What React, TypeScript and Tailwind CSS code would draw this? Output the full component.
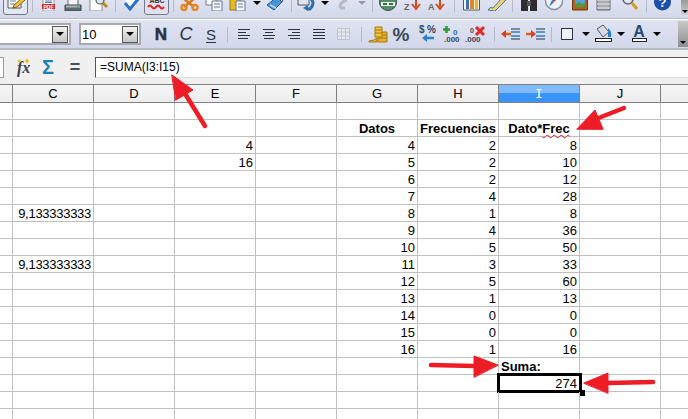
import React from "react";

const SANS = "font-['Liberation_Sans',Arial,sans-serif]";

function Drop() {
  return <span className="block h-0 w-0 border-x-[4px] border-t-[4px] border-x-transparent border-t-black" />;
}
function Sep1({ ml }: { ml: string }) {
  return <span className={`${ml} w-px bg-[#b4b8c8] h-[12px] mb-[6px] shrink-0`} />;
}
function Sep2({ ml }: { ml: string }) {
  return <span className={`${ml} w-px bg-[#b4b8c8] h-[15px] shrink-0`} />;
}
function I1({ ml, children }: { ml: string; children: React.ReactNode }) {
  return (
    <svg viewBox="0 0 24 24" className={`${ml} h-[24px] w-[24px] shrink-0 mb-[7px]`}>
      {children}
    </svg>
  );
}
function I2({ ml, children }: { ml: string; children: React.ReactNode }) {
  return (
    <svg viewBox="0 0 24 24" className={`${ml} h-[24px] w-[24px] shrink-0`}>
      {children}
    </svg>
  );
}
function Drop1({ ml, gray }: { ml: string; gray?: boolean }) {
  return (
    <span
      className={`${ml} mb-[13px] h-0 w-[8px] shrink-0 border-x-[4px] border-t-[4px] border-x-transparent ${
        gray ? "border-t-[#9a9daa]" : "border-t-black"
      }`}
    />
  );
}
function Combo({ cls, label }: { cls: string; label?: string }) {
  return (
    <div className={`${cls} h-[22px] border-2 border-[#a9a9b0] bg-white flex items-center justify-between shrink-0`}>
      <span className={`${SANS} text-[13px] leading-none text-black pl-[1px]`}>{label}</span>
      <span className="mr-[1px] w-[16px] h-[17px] border border-[#555] bg-gradient-to-b from-[#f2f2f2] to-[#c6c6c6] flex items-center justify-center">
        <Drop />
      </span>
    </div>
  );
}

const colW = "w-[81px] shrink-0";
const heads = ["C", "D", "E", "F", "G", "H", "I", "J"];

type Row = Record<string, string>;
const rows: Row[] = [
  {},
  {},
  { E: "4", G: "4", H: "2", I: "8" },
  { E: "16", G: "5", H: "2", I: "10" },
  { G: "6", H: "2", I: "12" },
  { G: "7", H: "4", I: "28" },
  { C: "9,133333333", G: "8", H: "1", I: "8" },
  { G: "9", H: "4", I: "36" },
  { G: "10", H: "5", I: "50" },
  { C: "9,133333333", G: "11", H: "3", I: "33" },
  { G: "12", H: "5", I: "60" },
  { G: "13", H: "1", I: "13" },
  { G: "14", H: "0", I: "0" },
  { G: "15", H: "0", I: "0" },
  { G: "16", H: "1", I: "16" },
  {},
  {},
  {},
  {},
];

function Cell({ r, c, i }: { r: Row; c: string; i: number }) {
  const base = `${colW} h-full border-r border-[#c0c0c0] relative`;
  if (i === 1 && c === "G") return <div className={`${base} text-center font-bold`}>Datos</div>;
  if (i === 1 && c === "H") return <div className={`${base} text-center font-bold`}>Frecuencias</div>;
  if (i === 1 && c === "I")
    return (
      <div className={`${base} text-center font-bold`}>
        Dato*<span className="underline decoration-wavy decoration-[#e02020] decoration-1 underline-offset-1">Frec</span>
      </div>
    );
  if (i === 15 && c === "I") return <div className={`${base} font-bold pl-[2px] whitespace-nowrap`}>Suma:</div>;
  if (i === 16 && c === "I")
    return (
      <div className={`${base} text-right pr-[2px]`}>
        274
        <span className="absolute left-[-2px] top-[-2px] right-[-3px] bottom-[-2px] border-[3px] border-black" />
        <span className="absolute right-[-6px] bottom-[-5px] h-[6px] w-[6px] bg-black" />
      </div>
    );
  return (
    <div className={`${base} text-right pr-[2px] whitespace-nowrap ${c === "C" ? "tracking-[-0.28px]" : ""}`}>{r[c] ?? ""}</div>
  );
}

export default function App() {
  return (
    <div className={`relative w-[688px] h-[419px] overflow-hidden bg-white flex flex-col ${SANS}`}>
      {/* standard toolbar */}
      <div className="h-[19px] shrink-0 bg-gradient-to-b from-[#dfe3f2] to-[#d3d8ea] border-b border-[#b9bcc4] flex items-end overflow-hidden relative">
        <span className="absolute left-[3px] top-[-6px] h-[21px] w-[25px] rounded-[3px] border border-[#77798a] bg-[#e4e7f2]" />
        <span className="absolute left-[144px] top-[-6px] h-[21px] w-[25px] rounded-[3px] border border-[#77798a] bg-[#dfe2ee]" />
        {/* edit */}
        <I1 ml="ml-[5px] relative">
          <path d="M3 5h13v16H3z" fill="#fff" stroke="#555" />
          <path d="M5 14h6M5 17h4" stroke="#6a7da8" />
          <path d="M9 18l8-7 3 2-8 7-4 1z" fill="#f2c440" stroke="#7a5a10" />
        </I1>
        <Sep1 ml="ml-[3px]" />
        {/* pdf */}
        <I1 ml="ml-[3px]">
          <path d="M7 5h11v19H7z" fill="#fff" stroke="#999" />
          <path d="M9 14h7M9 15.500h7" stroke="#5a7ab0" />
          <rect x="6" y="17" width="13" height="5" fill="#d8262a" />
          <text x="12.500" y="21.500" fontSize="5" fontWeight="700" fill="#fff" textAnchor="middle">PDF</text>
        </I1>
        {/* printer */}
        <I1 ml="ml-[1px]">
          <path d="M7 5h10v14H7z" fill="#f5f5f5" stroke="#666" />
          <path d="M4 18h16v6H4z" fill="#5f6a6c" stroke="#3f4648" />
          <path d="M5 18.500h14v2H5z" fill="#a9b4b5" />
          <circle cx="17" cy="19.500" r="1" fill="#27c04a" />
        </I1>
        {/* preview */}
        <I1 ml="ml-[1px]">
          <path d="M4 5h12v19H4z" fill="#fff" stroke="#888" />
          <circle cx="14" cy="13" r="4" fill="#dbe6f5" stroke="#555" strokeWidth="1.200" />
          <path d="M17 16l4 4" stroke="#c08a10" strokeWidth="3" />
        </I1>
        <Sep1 ml="ml-[5px]" />
        {/* spelling */}
        <I1 ml="ml-[3px]">
          <path d="M7 5h10v15H7z" fill="#fff" />
          <path d="M6 16l5 6 9-11" fill="none" stroke="#2a72c8" strokeWidth="3" />
        </I1>
        {/* auto spelling */}
        <I1 ml="ml-[1px] relative">
          <text x="13" y="16" fontSize="7" fontWeight="700" textAnchor="middle" fill="#333">ABC</text>
          <path d="M4 20q2-3 4 0t4 0t4 0t4 0" fill="none" stroke="#e02020" strokeWidth="2" />
        </I1>
        <Sep1 ml="ml-[5px]" />
        {/* scissors */}
        <I1 ml="ml-[3px]">
          <path d="M6 11l11 9M18 11L7 20" stroke="#d9791a" strokeWidth="2.500" />
          <circle cx="7" cy="20.500" r="2.600" fill="none" stroke="#e8861c" strokeWidth="2.200" />
          <circle cx="18" cy="20.500" r="2.600" fill="none" stroke="#e8861c" strokeWidth="2.200" />
        </I1>
        {/* copy */}
        <I1 ml="ml-[0px]">
          <path d="M5 8h10v10H5z" fill="#fff" stroke="#6b7990" />
          <path d="M11 14h10v10H11z" fill="#f4f6fa" stroke="#6b7990" />
          <path d="M13 17h6M13 20h6" stroke="#6b7990" />
        </I1>
        {/* paste */}
        <I1 ml="ml-[1px]">
          <path d="M4 6h10v17H4z" fill="#e8b923" stroke="#9a7a10" />
          <path d="M10 14h9v10h-9z" fill="#f4f6fa" stroke="#6b7990" />
          <path d="M12 17h5M12 20h5" stroke="#6b7990" />
        </I1>
        <Drop1 ml="ml-[3px]" />
        {/* brush */}
        <I1 ml="ml-[1px]">
          <path d="M5 18l10-8 5 5-8 8z" fill="#4a94d8" stroke="#1f5f9c" />
          <path d="M15 10l5-3 2 4-2 4z" fill="#dfe8f2" stroke="#445" />
          <path d="M8 18l6 3" stroke="#bcdcf5" strokeWidth="1.500" />
        </I1>
        <Sep1 ml="ml-[5px]" />
        {/* undo */}
        <I1 ml="ml-[4px]">
          <path d="M2 11h11v7H2z" fill="#dfe6f0" stroke="#556" />
          <path d="M14 11q6 5 0 11h-3" fill="none" stroke="#2a6fb0" strokeWidth="3" />
          <path d="M12 18l-5 3 5 3z" fill="#2a6fb0" />
        </I1>
        <Drop1 ml="ml-[1px]" />
        {/* redo */}
        <I1 ml="ml-[2px]">
          <path d="M16 13q-9 3-6 8h4" fill="none" stroke="#b6bac6" strokeWidth="3" />
        </I1>
        <Drop1 ml="ml-[3px]" gray />
        <Sep1 ml="ml-[6px]" />
        {/* navigator */}
        <I1 ml="ml-[3px]">
          <circle cx="12" cy="15" r="8.500" fill="#5a8a70" stroke="#33513f" />
          <path d="M5 15h14v4H5z" fill="#e8eef0" />
          <path d="M7 17h4M13 17h4" stroke="#2a7a2a" strokeWidth="2" />
        </I1>
        {/* sort */}
        <I1 ml="ml-[1px]">
          <text x="3" y="23" fontSize="9" fontWeight="700" fill="#666">Z</text>
          <path d="M15 8v12" stroke="#d84a1a" strokeWidth="2" />
          <path d="M11 17l4 5 4-5" fill="none" stroke="#d84a1a" strokeWidth="2" />
        </I1>
        <I1 ml="ml-[0px]">
          <text x="3" y="23" fontSize="9" fontWeight="700" fill="#666">A</text>
          <path d="M15 8v12" stroke="#d84a1a" strokeWidth="2" />
          <path d="M11 17l4 5 4-5" fill="none" stroke="#d84a1a" strokeWidth="2" />
        </I1>
        <Sep1 ml="ml-[5px]" />
        {/* chart */}
        <I1 ml="ml-[5px]">
          <path d="M3.500 6h16v17h-16z" fill="#f4f4f4" stroke="#556" />
          <path d="M6 12h3v10H6z" fill="#3a70b8" />
          <path d="M10 8h4v14h-4z" fill="#e0861c" />
          <path d="M15 13h3v9h-3z" fill="#e8b923" />
        </I1>
        {/* draw */}
        <I1 ml="ml-[1px]">
          <path d="M3 23q2-4 5-2l10-11 3 3-11 11z" fill="#f2d36a" stroke="#3a78b8" />
          <path d="M18 10l3 3" stroke="#d84a4a" strokeWidth="2.500" />
        </I1>
        <Sep1 ml="ml-[3px]" />
        {/* binoculars */}
        <I1 ml="ml-[4px]">
          <path d="M4 12h7v12H4zM13 12h7v12h-7z" fill="#2d2d2d" />
          <path d="M10 14h4v5h-4z" fill="#555" />
        </I1>
        {/* compass */}
        <I1 ml="ml-[0px]">
          <circle cx="13" cy="14" r="8.500" fill="#eef2f8" stroke="#8b93a3" strokeWidth="1.500" />
          <path d="M18 10l-5 5-2-2z" fill="#d8362a" />
          <path d="M8 20l3-7 2 2z" fill="#2a72c8" />
        </I1>
        {/* gallery */}
        <I1 ml="ml-[2px]">
          <path d="M5.500 8h15v15h-15z" fill="#b0601a" stroke="#6e3a10" />
          <path d="M8 11h10v9H8z" fill="#5aa0d8" />
          <path d="M8 17l4-2 3 2 3-1v4H8z" fill="#4f9a40" />
        </I1>
        {/* data sources */}
        <I1 ml="ml-[0px]">
          <path d="M6 8h13v15H6z" fill="#a9adb3" stroke="#62666c" />
          <path d="M6 13h13M6 17h13M6 21h13" stroke="#e6e8ea" />
        </I1>
        {/* zoom */}
        <I1 ml="ml-[1px]">
          <circle cx="12" cy="12" r="5" fill="#dbe6f5" stroke="#667" strokeWidth="1.500" />
          <path d="M16 16l5 6" stroke="#d8a010" strokeWidth="3" />
        </I1>
        <Sep1 ml="ml-[6px]" />
        {/* help */}
        <I1 ml="ml-[3px]">
          <circle cx="12.500" cy="15" r="8.500" fill="#1c4fa8" />
          <text x="12.500" y="20" fontSize="13" fontWeight="700" fill="#fff" textAnchor="middle">?</text>
        </I1>
        <span className="absolute right-0 top-0 h-[15px] w-[7px] bg-gradient-to-b from-[#9a9a9a] to-[#d0d0d0] flex items-end justify-center pb-[2px]">
          <span className="h-0 w-0 border-x-[3px] border-t-[3px] border-x-transparent border-t-black" />
        </span>
      </div>

      {/* format toolbar */}
      <div className="h-[31px] shrink-0 border-t border-white bg-gradient-to-b from-[#dfe3f2] to-[#d2d7ea] border-b-2 border-b-[#b9bcc4] flex items-center relative">
        <Combo cls="w-[71px] border-l-0" />
        <Combo cls="ml-[8px] w-[62px]" label="10" />
        <span className="ml-[13px] w-[14px] text-center text-[17px] font-bold leading-none text-[#2c3240] [-webkit-text-stroke:0.5px_#2c3240]">N</span>
        <span className="ml-[11px] w-[14px] text-center text-[18px] italic leading-none text-[#2c3240]">C</span>
        <span className="ml-[12px] w-[12px] text-center text-[15px] leading-none underline underline-offset-2 text-[#2c3240]">S</span>
        <Sep2 ml="ml-[10px]" />
        {[0, 1, 2, 3].map((k) => (
          <svg key={k} viewBox="0 0 12 10" className={`${k === 0 ? "ml-[10px]" : "ml-[13px]"} h-[10px] w-[12px] shrink-0`}>
            {k === 0 && <path d="M0 .5h12M0 3.5h8M0 6.5h12M0 9.5h10" stroke="#2c3240" />}
            {k === 1 && <path d="M0 .5h12M2 3.5h8M0 6.5h12M1 9.5h10" stroke="#2c3240" />}
            {k === 2 && <path d="M0 .5h12M4 3.5h8M0 6.5h12M2 9.5h10" stroke="#2c3240" />}
            {k === 3 && <path d="M0 .5h12M0 3.5h12M0 6.5h12M0 9.5h12" stroke="#2c3240" />}
          </svg>
        ))}
        <svg viewBox="0 0 13 12" className="ml-[12px] h-[12px] w-[13px] shrink-0">
          <path d="M.5.5h12v11H.5zM.5 4h12M.5 8h12M4.500 .5v11M8.500 .5v11" fill="#e6e8f0" stroke="#c2c5d0" />
        </svg>
        <Sep2 ml="ml-[11px]" />
        {/* coins */}
        <I2 ml="ml-[4px]">
          <path d="M3 19q5 0 8-3v4H3z" fill="#e8b030" stroke="#a87a10" />
          <path d="M12 10h9v10h-9z" fill="#e8b030" stroke="#a87a10" />
          <path d="M12 13h9M12 16h9" stroke="#a87a10" />
          <path d="M9 5h7v10H9z" fill="#f0c040" stroke="#a87a10" />
          <path d="M9 8h7M9 11h7" stroke="#a87a10" />
        </I2>
        <span className="ml-[1px] w-[20px] text-center text-[19px] font-bold leading-none text-[#3a4a5a]">%</span>
        {/* currency */}
        <I2 ml="ml-[4px]">
          <text x="4" y="11" fontSize="10" fontWeight="700" fill="#3a4a5a">$</text>
          <text x="12" y="11" fontSize="10" fontWeight="700" fill="#3a4a5a">%</text>
          <path d="M19 16H10" stroke="#2a80d0" strokeWidth="2.500" />
          <path d="M12 12l-5 4 5 4z" fill="#2a80d0" />
        </I2>
        {/* add decimal */}
        <I2 ml="ml-[1px]">
          <path d="M6.500 4v7M3 7.500h7" stroke="#2f9a2f" strokeWidth="2.500" />
          <text x="13" y="13" fontSize="8" fontWeight="700" fill="#2a6fc0">0</text>
          <text x="4" y="20" fontSize="8" fontWeight="700" fill="#3a4a5a">.000</text>
        </I2>
        {/* remove decimal */}
        <I2 ml="ml-[0px]">
          <text x="6" y="11" fontSize="7" fontWeight="700" fill="#3a4a5a">0</text>
          <path d="M12 5l8 8M20 5l-8 8" stroke="#e02828" strokeWidth="3" />
          <text x="1" y="20" fontSize="8" fontWeight="700" fill="#3a4a5a">.000</text>
        </I2>
        <Sep2 ml="ml-[6px]" />
        {/* indent */}
        <I2 ml="ml-[3px]">
          <path d="M6 12h7" stroke="#e0601a" strokeWidth="2.500" />
          <path d="M8 8l-5 4 5 4z" fill="#d8401a" />
          <path d="M13 7h9M13 17h9" stroke="#2c3240" />
          <path d="M13 10h9M13 14h9" stroke="#2a80c0" strokeWidth="1.500" />
        </I2>
        <I2 ml="ml-[1px]">
          <path d="M3 12h6" stroke="#e0601a" strokeWidth="2.500" />
          <path d="M8 8l5 4-5 4z" fill="#d8401a" />
          <path d="M13 7h9M13 17h9" stroke="#2c3240" />
          <path d="M13 10h9M13 14h9" stroke="#2a80c0" strokeWidth="1.500" />
        </I2>
        <Sep2 ml="ml-[4px]" />
        <span className="ml-[9px] h-[12px] w-[12px] border border-[#2c3240] bg-[#eef0f7] shrink-0" />
        <span className="ml-[9px] w-[8px] shrink-0"><Drop /></span>
        {/* fill colour */}
        <I2 ml="ml-[0px]">
          <path d="M7 7l6-4 6 7-6 5z" fill="#d8dbe0" stroke="#556" />
          <path d="M18 6q4 3 3 9h-3z" fill="#2a80c0" />
          <rect x="5.500" y="16.500" width="16" height="3" fill="#fff" stroke="#222" />
        </I2>
        <span className="ml-[3px] w-[8px] shrink-0"><Drop /></span>
        {/* font colour */}
        <I2 ml="ml-[2px]">
          <text x="12" y="15" fontSize="16" fontWeight="700" fill="#2a4a70" textAnchor="middle">A</text>
          <rect x="5.500" y="16.500" width="14" height="3" fill="#fff" stroke="#222" />
        </I2>
        <span className="ml-[2px] w-[8px] shrink-0"><Drop /></span>
        <span className="absolute right-0 top-[1px] h-[26px] w-[10px] bg-gradient-to-b from-[#c8c8c8] to-[#8f8f8f] flex items-end justify-center pb-[3px]">
          <span className="h-0 w-0 border-x-[3px] border-t-[3px] border-x-transparent border-t-black" />
        </span>
      </div>

      {/* formula bar */}
      <div className="h-[34px] shrink-0 bg-[#f0f0f0] flex items-center">
        <span className="w-[4px] h-[21px] border-y border-r border-[#9a9a9a] bg-white shrink-0" />
        <svg viewBox="0 0 20 20" className="ml-[10px] h-[20px] w-[20px] shrink-0">
          <text x="3" y="16" fontSize="16" fontStyle="italic" fontWeight="700" fill="#3a4252" fontFamily="'Liberation Serif',serif">fx</text>
          <path d="M13 1l1 2 2 1-2 1-1 2-1-2-2-1 2-1zM5 2l.7 1.300 1.300.7-1.300.7-.7 1.300-.7-1.300-1.300-.7 1.300-.7z" fill="#e8c020" />
        </svg>
        <span className="ml-[4px] w-[20px] text-[20px] font-bold leading-none text-[#1a80b8] text-center shrink-0">Σ</span>
        <span className="ml-[9px] w-[16px] text-[18px] font-bold leading-none text-[#44505c] text-center shrink-0">=</span>
        <div className="ml-[12px] h-[21px] flex-1 bg-white border-l border-t border-b border-[#555] border-b-[#ddd] flex items-center pl-[4px] text-[12px] text-black">
          =SUMA(I3:I15)
        </div>
      </div>

      {/* column header */}
      <div className="h-[19px] shrink-0 flex border-y border-[#808080] bg-gradient-to-b from-[#f6f6f6] to-[#ececec] text-[13px] leading-[17px] text-black">
        <div className="w-[13px] shrink-0 border-r border-[#808080]" />
        {heads.map((h) => (
          <div
            key={h}
            className={`${colW} text-center border-r ${
              h === "I"
                ? "border-[#3d8ef0] bg-gradient-to-b from-[#7fbafc] from-50% to-[#3a94f8] to-50% text-white font-['DejaVu_Sans_Mono',monospace]"
                : "border-[#808080]"
            }`}
          >
            {h}
          </div>
        ))}
      </div>

      {/* grid */}
      <div className="flex-1 overflow-hidden text-[13px] leading-[17px] text-black">
        {rows.map((r, i) => (
          <div key={i} className="h-[17px] flex border-b border-[#c0c0c0]">
            <div className="w-[13px] shrink-0 border-r border-[#c0c0c0]" />
            {heads.map((c) => (
              <Cell key={c} r={r} c={c} i={i} />
            ))}
          </div>
        ))}
      </div>

      {/* annotation arrows */}
      <svg className="absolute left-0 top-0 pointer-events-none" width="688" height="419" viewBox="0 0 688 419">
        <g fill="#ee1c25" stroke="#ee1c25" strokeLinecap="round" strokeLinejoin="round">
          <path d="M205 126L184 92" strokeWidth="4.500" fill="none" />
          <path d="M172 75L193 90L176 100Z" strokeWidth="1" />
          <path d="M624 108L596 119" strokeWidth="4.500" fill="none" />
          <path d="M577 129L595 110L603 129Z" strokeWidth="1" />
          <path d="M431 365L474 366" strokeWidth="4.500" fill="none" />
          <path d="M498 365L474 356L474 377Z" strokeWidth="1" />
          <path d="M653 382L608 383" strokeWidth="4.500" fill="none" />
          <path d="M584 383L608 373L608 393Z" strokeWidth="1" />
        </g>
      </svg>
    </div>
  );
}
